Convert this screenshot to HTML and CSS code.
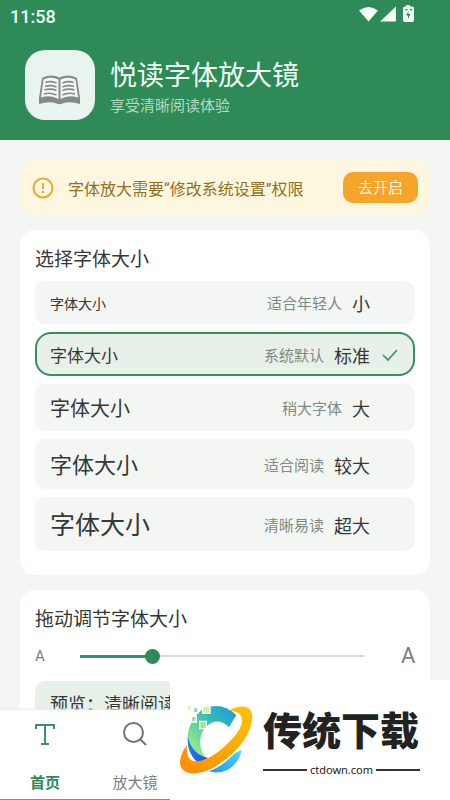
FILE: index.html
```html
<!DOCTYPE html>
<html lang="zh-CN">
<head>
<meta charset="utf-8">
<meta name="viewport" content="width=device-width, initial-scale=1">
<title>悦读字体放大镜</title>
<link rel="stylesheet" href="styles.css">
</head>
<body>
<div class="app">
  <header class="header">
    <div class="status">
      <span class="status-time">11:58</span>
      <svg class="status-icons" width="56" height="18" viewBox="0 0 56 18" fill="#f4fff8">
        <path d="M0 5.500Q9.500-1.500 19 5.500L9.500 16.500Z"/>
        <path d="M37 1.500V16.500H21Z"/>
        <path d="M47 1.500h4v-1.500h-4zM46 1.500h7q2 0 2 2V15q0 2-2 2h-7q-2 0-2-2V3.500q0-2 2-2z"/>
        <path d="M49.500 6v3h2l-2.500 5v-3.500h-2zM46.500 4h2v1.500h-2zM51 4h2v1.500h-2z" fill="#2e8b57"/>
      </svg>
    </div>
    <div class="brand">
      <div class="brand-logo">
        <svg width="42" height="30" viewBox="0 0 42 30" fill="none" stroke="#858b88">
          <path d="M0 23L3 3Q12-1.500 20.500 2.500Q29-1.500 38 3L41 23V29Q31 26 23.500 28.500Q20.500 30 17.500 28.500Q10 26 0 29Z" fill="#858b88" stroke="none"/>
          <path d="M4.500 4.500Q12 1 19.500 4.500V24Q12 19.500 2 22.500ZM21.500 4.500Q29 1 36.500 4.500L39 22.500Q29 19.500 21.500 24Z" fill="#f4f8f5" stroke="none"/>
          <path d="M6.500 7.500q5-2 11 .500M6 11.500q6-2 11.500 .500M5.500 15q6-2 12 .500M5 19q6-2 12.500 1M23.500 8q6-2.500 11-.500M23.500 12q6-2.500 11.500-.500M23.500 15.500q6-2.500 12-.500M23.500 20q6-3 12.500-1" stroke-width="1.600"/>
        </svg>
      </div>
      <div>
        <h1 class="brand-title">悦读字体放大镜</h1>
        <p class="brand-sub">享受清晰阅读体验</p>
      </div>
    </div>
  </header>

  <main class="content">
    <section class="notice">
      <svg width="22" height="22" viewBox="0 0 22 22" fill="none" stroke="#eaa932" stroke-width="2">
        <circle cx="11" cy="11" r="9.500"/>
        <path d="M11 6v6M11 14v2"/>
      </svg>
      <p class="notice-text">字体放大需要“修改系统设置”权限</p>
      <button class="notice-button" type="button">去开启</button>
    </section>

    <section class="card">
      <h2 class="card-title">选择字体大小</h2>
      <div class="options">
        <label class="option">
          <input class="option-input" type="radio" name="size">
          <span class="option-sample size-s">字体大小</span>
          <span class="option-hint">适合年轻人</span>
          <span class="option-name">小</span>
          <span class="option-mark"></span>
        </label>
        <label class="option">
          <input class="option-input" type="radio" name="size" checked>
          <span class="option-sample size-m">字体大小</span>
          <span class="option-hint">系统默认</span>
          <span class="option-name">标准</span>
          <span class="option-mark"><svg width="20" height="16" viewBox="0 0 20 16" fill="none" stroke="#3f9465" stroke-width="1.700"><path d="M3 7l5 5L17 2"/></svg></span>
        </label>
        <label class="option">
          <input class="option-input" type="radio" name="size">
          <span class="option-sample size-l">字体大小</span>
          <span class="option-hint">稍大字体</span>
          <span class="option-name">大</span>
          <span class="option-mark"></span>
        </label>
        <label class="option">
          <input class="option-input" type="radio" name="size">
          <span class="option-sample size-xl">字体大小</span>
          <span class="option-hint">适合阅读</span>
          <span class="option-name">较大</span>
          <span class="option-mark"></span>
        </label>
        <label class="option">
          <input class="option-input" type="radio" name="size">
          <span class="option-sample size-xxl">字体大小</span>
          <span class="option-hint">清晰易读</span>
          <span class="option-name">超大</span>
          <span class="option-mark"></span>
        </label>
      </div>
    </section>

    <section class="card">
      <h2 class="card-title"><label for="scale">拖动调节字体大小</label></h2>
      <div class="slider">
        <span class="slider-min">A</span>
        <input class="slider-input" id="scale" type="range" min="0" max="100" value="24">
        <span class="slider-max">A</span>
      </div>
      <p class="preview">预览：清晰阅读</p>
    </section>
  </main>

  <nav class="tabs">
    <a class="tab tab-active" href="#home">
      <svg width="24" height="24" viewBox="0 0 24 24" fill="none" stroke="#3b9163" stroke-width="2"><path d="M3 7V3H21V7M12 3V22M8 22H16"/></svg>
      <span>首页</span>
    </a>
    <a class="tab" href="#magnifier">
      <svg width="24" height="24" viewBox="0 0 24 24" fill="none" stroke="#717674" stroke-width="2"><circle cx="10.500" cy="10.500" r="9.500"/><path d="M17 17L23 23"/></svg>
      <span>放大镜</span>
    </a>
  </nav>

  <aside class="mark">
    <svg width="77" height="74" viewBox="25 70 231 222">
      <defs>
        <linearGradient id="c" x1="0" y1="1" x2="1" y2="0"><stop offset=".2" stop-color="#8ee88b"/><stop offset=".6" stop-color="#35bdb9"/><stop offset="1" stop-color="#1d98df"/></linearGradient>
        <linearGradient id="o" x1="0" y1="1" x2="1" y2="0"><stop stop-color="#ff8a00"/><stop offset="1" stop-color="#ffc400"/></linearGradient>
        <linearGradient id="b" x1="0" y1="0" x2="1" y2="1"><stop stop-color="#2a8cf0"/><stop offset="1" stop-color="#1f4fe8"/></linearGradient>
        <linearGradient id="d" x1="0" y1="1" x2="1" y2="0"><stop stop-color="#2196f3"/><stop offset="1" stop-color="#4fd6fb"/></linearGradient>
      </defs>
      <path d="M200 106Q160 68 110 84C60 105 42 175 60 215Q75 242 116 240C85 215 85 165 110 140Q145 110 178 143Z" fill="url(#c)"/>
      <path d="M55 170C60 205 85 230 116 235Q95 248 80 245C60 225 52 200 55 170Z" fill="url(#b)"/>
      <path d="M216 211Q198 217 186 230C168 248 145 265 118 275Q145 284 175 270Q207 252 216 211Z" fill="url(#d)"/>
      <path d="M178 93C215 72 248 78 248 112C247 160 205 215 150 252C95 290 35 292 31 250Q31 222 52 196Q48 238 70 244C105 252 160 212 197 167C225 132 228 94 178 93Z" fill="url(#o)"/>
      <g stroke="#fff" stroke-width="4"><path d="M99 79h22v22H99z" fill="#d5ee9a"/><path d="M90 125h20v22H90z" fill="#a8e08c"/><path d="M65 110h15v17H65z" fill="#a3e0a0"/><path d="M71 84h14v15H71z" fill="#8fdca0"/></g>
      <path d="M54 78h10v11H54z" fill="#e6f3c0"/>
    </svg>
    <div class="mark-text">
      <strong class="mark-name">传统下载</strong>
      <span class="mark-site">ctdown.com</span>
    </div>
  </aside>
</div>
</body>
</html>
```
FILE: styles.css
```css
* {
  box-sizing: border-box;
  margin: 0;
}

body {
  background: #f3f6f3;
  color: #343836;
  font-family: Roboto, "Noto Sans CJK SC", sans-serif;
}

h1,
h2 {
  font-weight: 400;
}

.app {
  position: relative;
  display: flex;
  flex-direction: column;
  height: 100vh;
  overflow: hidden;
}

.header {
  flex: none;
  padding-bottom: 20px;
  background: #2e8b57;
  color: #f4fff8;
}

.status {
  display: flex;
  align-items: center;
  justify-content: space-between;
  height: 32px;
  padding: 0 35px 0 10px;
}

.status-time {
  font-size: 18px;
  font-weight: 500;
}

.status-icons {
  margin-bottom: 4px;
}

.brand {
  display: flex;
  align-items: center;
  gap: 15px;
  padding: 18px 25px 0;
}

.brand-logo {
  display: flex;
  align-items: center;
  justify-content: center;
  width: 70px;
  height: 70px;
  padding-top: 9px;
  border-radius: 20px;
  background: #eaf4ee;
}

.brand-title {
  padding-top: 4px;
  font-size: 27px;
  line-height: 38px;
}

.brand-sub {
  color: #b4dac4;
  font-size: 15px;
  line-height: 22px;
}

.content {
  display: flex;
  flex: 1;
  flex-direction: column;
  gap: 15px;
  min-height: 0;
  padding: 20px 20px 0;
  overflow: hidden;
}

.notice {
  display: flex;
  flex: none;
  align-items: center;
  padding: 12px;
  border-radius: 15px;
  background: #fef7df;
}

.notice-text {
  flex: 1;
  padding-left: 14px;
  color: #917023;
  font-size: 16px;
}

.notice-button {
  padding: 1px 15px 0;
  border: 0;
  border-radius: 10px;
  background: #f5a52a;
  color: #fff5dc;
  font: inherit;
  font-size: 15px;
  line-height: 30px;
}

.card {
  flex: none;
  padding: 17px 15px 24px;
  border-radius: 15px;
  background: #fff;
}

.card-title {
  font-size: 19px;
  line-height: 26px;
}

.options {
  display: flex;
  flex-direction: column;
  gap: 8px;
  margin-top: 8px;
}

.option {
  position: relative;
  display: flex;
  align-items: center;
  gap: 10px;
  padding: 11px 15px 7px;
  border-radius: 10px;
  background: #f4f6f4;
}

.option:has(:checked) {
  border-radius: 16px;
  background: #e7f0e9;
  box-shadow: inset 0 0 0 2px #3a8f61;
}

.option-input {
  position: absolute;
  opacity: 0;
}

.option-sample {
  flex: 1;
}

.size-s {
  font-size: 14px;
  line-height: 25px;
}

.size-m {
  font-size: 17px;
  line-height: 26px;
}

.size-l {
  font-size: 20px;
  line-height: 29px;
}

.size-xl {
  font-size: 22px;
  line-height: 32px;
}

.size-xxl {
  font-size: 25px;
  line-height: 36px;
}

.option-hint {
  color: #7f8983;
  font-size: 15px;
  line-height: 25px;
}

.option-name {
  font-size: 18px;
  line-height: 25px;
}

.option-mark {
  display: flex;
  width: 20px;
}

.slider {
  display: flex;
  align-items: center;
  justify-content: space-between;
  margin: 8px 0 10px;
  color: #7b817e;
  line-height: 30px;
}

.slider-min {
  width: 14px;
  font-size: 15px;
}

.slider-max {
  width: 14px;
  font-size: 22px;
}

.slider-input {
  flex: 1;
  height: 16px;
  margin: 0 36px 0 31px;
  appearance: none;
  background: linear-gradient(#38905f, #38905f) 0 50% / 25% 3px no-repeat, linear-gradient(#dcdcdc, #dcdcdc) 0 50% / 100% 2px no-repeat;
}

.slider-input::-webkit-slider-thumb {
  width: 15px;
  height: 15px;
  appearance: none;
  border-radius: 50%;
  background: #2e8b57;
}

.preview {
  padding: 11px 15px 7px;
  border-radius: 10px;
  background: #e7f0e9;
  font-size: 18px;
  line-height: 26px;
}

.tabs {
  display: grid;
  flex: none;
  grid-template-columns: repeat(5, 1fr);
  padding: 12px 0 5px;
  border-bottom: 1px solid #8a8a8a;
  background: #fff;
  box-shadow: 0 -1px 2px #e8ebe8;
}

.tab {
  display: flex;
  flex-direction: column;
  align-items: center;
  gap: 26px;
  color: #7b817e;
  font-size: 15px;
  line-height: 22px;
  text-decoration: none;
}

.tab-active {
  color: #2e8b57;
  font-weight: 700;
}

.mark {
  position: absolute;
  right: 0;
  bottom: 0;
  display: flex;
  gap: 8px;
  width: 280px;
  height: 120px;
  padding: 23px 8px 0;
  background: #fff;
}

.mark-text {
  display: flex;
  flex-direction: column;
  width: 157px;
  color: #222;
}

.mark-name {
  font-size: 39px;
  font-weight: 900;
  line-height: 58px;
}

.mark-site {
  display: flex;
  align-items: center;
  gap: 3px;
  font-family: "Noto Sans", sans-serif;
  font-size: 11px;
  line-height: 18px;
}

.mark-site::before,
.mark-site::after {
  flex: 1;
  height: 2px;
  background: #333;
  content: "";
}
```
